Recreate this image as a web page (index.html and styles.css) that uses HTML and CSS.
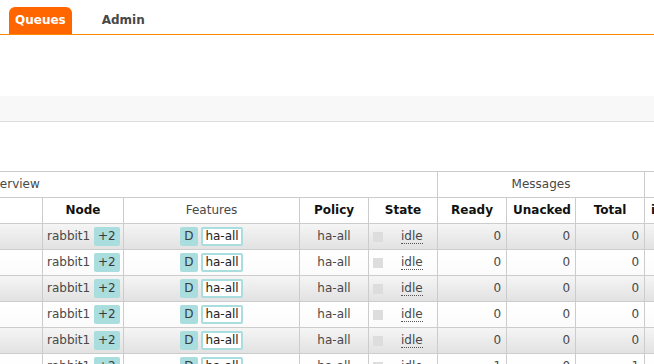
FILE: index.html
```html
<!DOCTYPE html>
<html lang="en">
<head>
<meta charset="utf-8">
<title>Queues</title>
<link rel="stylesheet" href="styles.css">
</head>
<body>
<div class="menu">
  <span class="tab active">Queues</span>
  <span class="tab">Admin</span>
</div>
<div class="spacer"></div>
<div class="band"></div>
<div class="list-wrap">
<table class="list">
  <colgroup>
    <col class="w-name">
    <col class="w-node">
    <col class="w-feat">
    <col class="w-69">
    <col class="w-69">
    <col class="w-69">
    <col class="w-69">
    <col class="w-69">
    <col class="w-in">
    <col class="w-del">
    <col class="w-ack">
  </colgroup>
  <thead>
    <tr class="grp">
      <th colspan="5">Overview</th>
      <th colspan="3">Messages</th>
      <th colspan="3">Message rates</th>
    </tr>
    <tr class="hdr">
      <th>Name</th>
      <th class="b">Node</th>
      <th>Features</th>
      <th class="b">Policy</th>
      <th class="b">State</th>
      <th class="b">Ready</th>
      <th class="b">Unacked</th>
      <th class="b">Total</th>
      <th class="b">incoming</th>
      <th class="b">deliver / get</th>
      <th class="b">ack</th>
    </tr>
  </thead>
  <tbody>
    <tr class="alt1">
      <td class="name">orders.q1</td>
      <td class="node">rabbit1 <span class="badge">+2</span></td>
      <td class="c"><span class="badge">D</span> <span class="pol">ha-all</span></td>
      <td class="c">ha-all</td>
      <td class="state"><span class="sq"></span><span class="idle">idle</span></td>
      <td class="r">0</td><td class="r">0</td><td class="r">0</td>
      <td class="r"></td><td class="r"></td><td class="r"></td>
    </tr>
    <tr class="alt2">
      <td class="name">orders.q2</td>
      <td class="node">rabbit1 <span class="badge">+2</span></td>
      <td class="c"><span class="badge">D</span> <span class="pol">ha-all</span></td>
      <td class="c">ha-all</td>
      <td class="state"><span class="sq"></span><span class="idle">idle</span></td>
      <td class="r">0</td><td class="r">0</td><td class="r">0</td>
      <td class="r"></td><td class="r"></td><td class="r"></td>
    </tr>
    <tr class="alt1">
      <td class="name">orders.q3</td>
      <td class="node">rabbit1 <span class="badge">+2</span></td>
      <td class="c"><span class="badge">D</span> <span class="pol">ha-all</span></td>
      <td class="c">ha-all</td>
      <td class="state"><span class="sq"></span><span class="idle">idle</span></td>
      <td class="r">0</td><td class="r">0</td><td class="r">0</td>
      <td class="r"></td><td class="r"></td><td class="r"></td>
    </tr>
    <tr class="alt2">
      <td class="name">orders.q4</td>
      <td class="node">rabbit1 <span class="badge">+2</span></td>
      <td class="c"><span class="badge">D</span> <span class="pol">ha-all</span></td>
      <td class="c">ha-all</td>
      <td class="state"><span class="sq"></span><span class="idle">idle</span></td>
      <td class="r">0</td><td class="r">0</td><td class="r">0</td>
      <td class="r"></td><td class="r"></td><td class="r"></td>
    </tr>
    <tr class="alt1">
      <td class="name">orders.q5</td>
      <td class="node">rabbit1 <span class="badge">+2</span></td>
      <td class="c"><span class="badge">D</span> <span class="pol">ha-all</span></td>
      <td class="c">ha-all</td>
      <td class="state"><span class="sq"></span><span class="idle">idle</span></td>
      <td class="r">0</td><td class="r">0</td><td class="r">0</td>
      <td class="r"></td><td class="r"></td><td class="r"></td>
    </tr>
    <tr class="alt2">
      <td class="name">orders.q6</td>
      <td class="node">rabbit1 <span class="badge">+2</span></td>
      <td class="c"><span class="badge">D</span> <span class="pol">ha-all</span></td>
      <td class="c">ha-all</td>
      <td class="state"><span class="sq"></span><span class="idle">idle</span></td>
      <td class="r">1</td><td class="r">0</td><td class="r">1</td>
      <td class="r"></td><td class="r"></td><td class="r"></td>
    </tr>
  </tbody>
</table>
</div>
</body>
</html>
```

FILE: styles.css
```css
html, body {
  margin: 0;
  overflow: hidden;
}
body {
  font-family: "DejaVu Sans", Verdana, sans-serif;
  font-size: 12px;
  color: #484848;
  background: #fff;
}
.menu {
  display: flex;
  align-items: flex-end;
  gap: 24px;
  height: 27px;
  padding: 7px 0 0 9px;
  border-bottom: 1px solid #f80;
}
.tab {
  padding: 0 6px;
  line-height: 27px;
  font-weight: bold;
  color: #484848;
}
.tab.active {
  background: #f60;
  color: #fff;
  border-radius: 6px 6px 0 0;
}
.spacer {
  height: 61px;
}
.band {
  height: 25px;
  background: #f8f8f8;
  border-bottom: 1px solid #ddd;
}
.list-wrap {
  margin-top: 49px;
  overflow: hidden;
}
.list {
  table-layout: fixed;
  border-collapse: separate;
  border-spacing: 0;
  margin-left: -414px;
  width: 1292px;
}
.list th, .list td {
  box-sizing: border-box;
  height: 26px;
  padding: 0 6px;
  line-height: 19px;
  vertical-align: middle;
  border-right: 1px solid #ccc;
  border-bottom: 1px solid #ccc;
  white-space: nowrap;
  overflow: visible;
}
.list th {
  font-weight: normal;
  text-align: center;
  background: #fff;
}
.list th.b {
  font-weight: bold;
  color: #111;
}
.list .grp th {
  height: 27px;
  border-top: 1px solid #ccc;
}
.w-name { width: 457px; }
.w-node { width: 81px; }
.w-feat { width: 176px; }
.w-69 { width: 69px; }
.w-in { width: 73px; }
.w-del { width: 90px; }
.w-ack { width: 70px; }
.alt1 td {
  background: linear-gradient(#f5f5f5, #e2e2e2);
}
.alt2 td {
  background: linear-gradient(#ffffff, #fbfbfb);
}
.list td.c { text-align: center; }
.list td.node { text-align: left; padding-left: 4px; }
.list td.r { text-align: right; padding-right: 5px; }
.list td.name { text-align: left; }
.list td.state { text-align: left; padding-left: 4px; }
.badge {
  display: inline-block;
  background: #add;
  color: #3a3a3a;
  padding: 2px 4px;
  line-height: 15px;
  border-radius: 2px;
  vertical-align: middle;
}
.pol {
  display: inline-block;
  background: #fff;
  color: #222;
  border: 2px solid #add;
  padding: 0 2px;
  line-height: 15px;
  border-radius: 2px;
  vertical-align: middle;
}
.sq {
  display: inline-block;
  width: 10px;
  height: 10px;
  background: #ddd;
  margin-right: 18px;
  vertical-align: middle;
}
.idle {
  border-bottom: 1px dotted #555;
}
```
